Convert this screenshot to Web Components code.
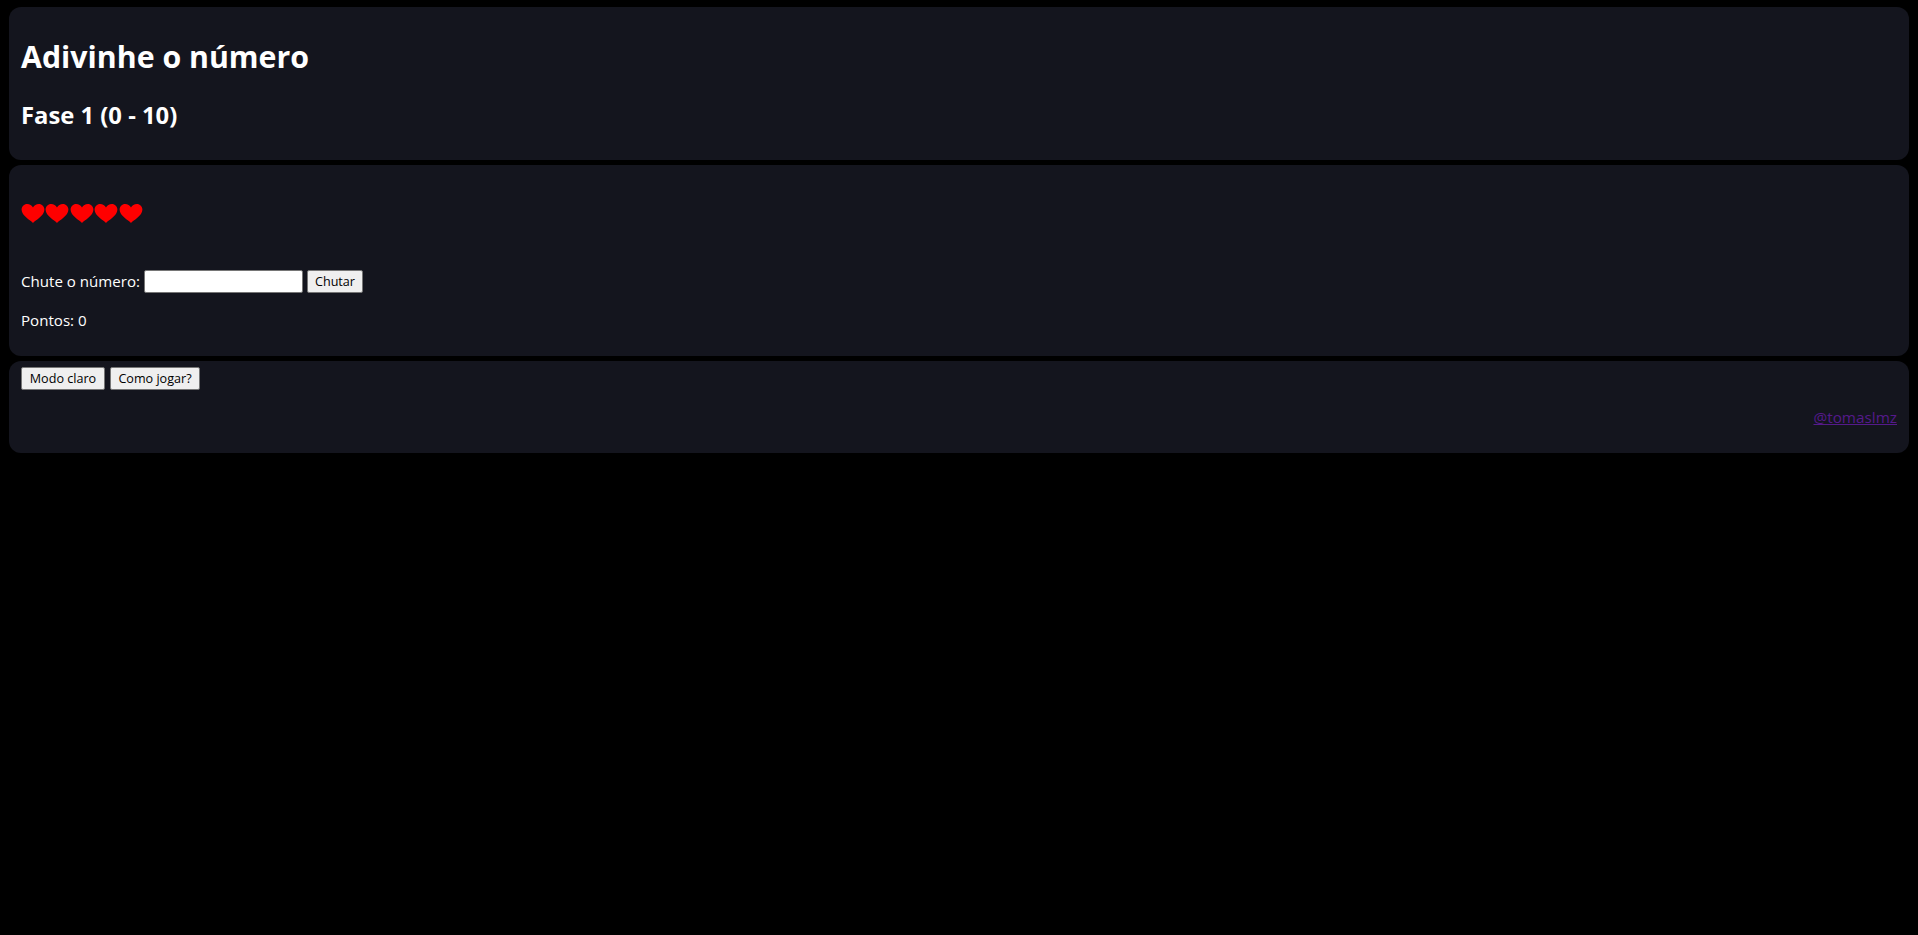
<!DOCTYPE html>
<html lang="pt"><head><meta charset="utf-8">
<style>
html,body{margin:0;background:#000;height:100%}
body{padding:7px 9px 0;box-sizing:border-box;font-family:"Open Sans","Noto Sans",sans-serif;color:#fff;font-size:15.1px}
</style></head><body>
<game-app></game-app>
<script>
class GamePanel extends HTMLElement{constructor(){super();this.attachShadow({mode:'open'}).innerHTML=`<style>:host{display:flow-root;background:#14151e;border-radius:12px;padding:0 12px}</style><slot></slot>`}}
class HeartRow extends HTMLElement{constructor(){super();const n=+this.getAttribute('count')||5;const h='<svg viewBox="0 0 24.4 19"><path fill="#f00" d="M12 19C9.500 16.400 .6 11.600 .6 5.800 .6 2.400 3 0 6.200 0c2.500 0 4.600 1.300 5.800 3.400C13.200 1.300 15.300 0 17.800 0c3.200 0 5.600 2.400 5.600 5.800 0 5.800-8.900 10.600-11.400 13.200z"/></svg>';this.attachShadow({mode:'open'}).innerHTML=`<style>:host{display:flex;height:19px}svg{display:block;width:24.4px;height:19px;flex:none}</style>`+h.repeat(n)}}
class GameApp extends HTMLElement{constructor(){super();this.attachShadow({mode:'open'}).innerHTML=`<style>
:host{display:flex;flex-direction:column;gap:5px;font-family:"Open Sans","Noto Sans",sans-serif;color:#fff;font-size:15.1px}
h1{font-size:30.3px;line-height:44px;margin:28px 0 0}
h2{font-size:23.8px;line-height:32px;margin:20px 0 29px}
p{margin:0;line-height:22px}
input{width:153px;height:17px;padding:2px;box-sizing:content-box;border:1px solid #767676;border-radius:2px;background:#fff;margin:0}
button{font:12.6px "Open Sans","Noto Sans",sans-serif;height:23px;padding:1px 6px;box-sizing:border-box;background:#efefef;border:1px solid #767676;border-radius:2px;color:#000;margin:0}
.h{margin:39px 0 47px}
.f{display:flex;align-items:center;gap:4px}
.l{width:119px;padding-bottom:2px}
.a{text-align:right;margin:16px 0 25px}
a{color:#551a8b;font-size:15.3px}
</style>
<game-panel><h1>Adivinhe o número</h1><h2>Fase 1 (0 - 10)</h2></game-panel>
<game-panel><heart-row class="h" count="5"></heart-row><div class="f"><span class="l">Chute o número:</span><input type="text"><button style="width:56px">Chutar</button></div><p style="margin:16px 0 25px">Pontos: 0</p></game-panel>
<game-panel><div class="f" style="margin-top:6px;gap:5px"><button style="width:84px">Modo claro</button><button style="width:90px">Como jogar?</button></div><p class="a"><a href="#">@tomaslmz</a></p></game-panel>`}}
customElements.define('game-panel',GamePanel);customElements.define('heart-row',HeartRow);customElements.define('game-app',GameApp);
</script></body></html>
